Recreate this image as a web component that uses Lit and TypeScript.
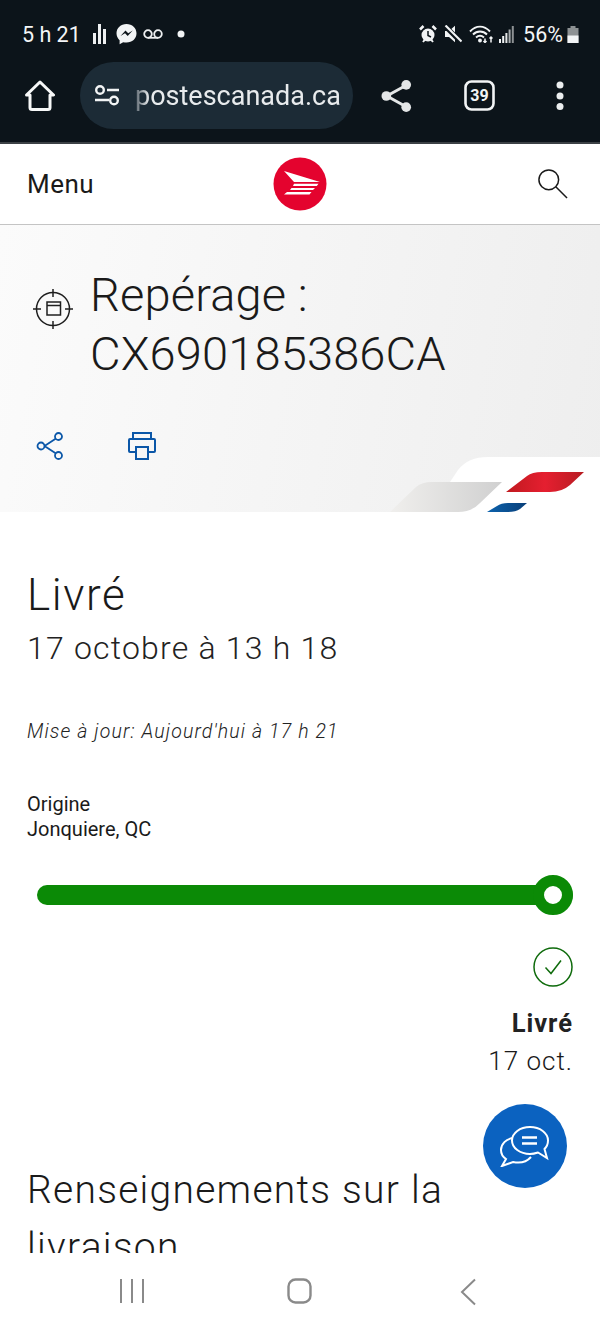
import { LitElement, html, css } from "lit";
import { customElement } from "lit/decorators.js";

@customElement("app-root")
export class AppRoot extends LitElement {
  static styles = css`
    :host { display: block; width: 600px; height: 1333px; overflow: hidden; background: #fff; font-family: Roboto, "Liberation Sans", sans-serif; color: #1a1a1a; position: relative; }
    svg { display: block; flex: none; }
    .chrome { height: 142px; background: #0c141a; border-bottom: 2px solid #3c4145; color: #fff; box-sizing: content-box; }
    .status { height: 62px; padding: 6px 21px 0 22px; display: flex; align-items: center; box-sizing: border-box; }
    .time { font-size: 21.5px; font-weight: 400; color: #f4f6f7; margin-right: 12px; }
    .status-left { display: flex; align-items: center; flex: 1; }
    .status-right { display: flex; align-items: center; }
    .pct { font-size: 21.5px; color: #f4f6f7; margin-left: 9px; margin-right: 4px; }
    .toolbar { height: 67px; display: flex; align-items: center; padding-left: 25px; }
    .pill { width: 273px; height: 67px; border-radius: 34px; background: #1c2b36; margin-left: 25px; display: flex; align-items: center; padding-left: 14px; box-sizing: border-box; gap: 15px; }
    .url { font-size: 27px; color: #e8ebed; white-space: nowrap; -webkit-mask-image: linear-gradient(90deg, rgba(0,0,0,.3), #000 14px); mask-image: linear-gradient(90deg, rgba(0,0,0,.3), #000 14px); }
    .tool-share { margin-left: 28px; }
    .tool-tabs { margin-left: 51px; }
    .tool-more { margin-left: 61px; }
    .head { height: 80px; display: flex; align-items: center; justify-content: space-between; padding: 0 32px 0 27px; border-bottom: 1px solid #c4c4c4; position: relative; box-sizing: content-box; }
    .menu { font-size: 26px; font-weight: 400; color: #1a1a1a; letter-spacing: 0.5px; }
    .logo { position: absolute; left: 273px; top: 13px; }
    .hero { height: 287px; position: relative; background: linear-gradient(100deg, #fbfbfb 0%, #f4f4f4 55%, #eeeeee 100%); overflow: hidden; padding: 40px 0 0 33px; box-sizing: border-box; }
    .title-row { display: flex; gap: 16px; align-items: flex-start; }
    .target { margin-top: 23px; margin-left: -1px; }
    h1 { margin: 0; font-size: 47px; font-weight: 300; line-height: 59px; color: #1a1a1a; letter-spacing: 0.15px; }
    .actions { display: flex; gap: 64px; margin-top: 49px; margin-left: 3px; }
    .swoosh { position: absolute; left: 380px; top: 225px; }
    .content { height: 741px; overflow: hidden; padding: 0 27px; box-sizing: border-box; }
    .status-title { margin: 51px 0 0; font-size: 44px; font-weight: 300; line-height: 64px; letter-spacing: 1.6px; }
    .date { font-size: 32px; font-weight: 300; line-height: 42px; letter-spacing: 1.2px; color: #222; }
    .updated { font-size: 19.5px; font-style: italic; font-weight: 300; margin-top: 50px; letter-spacing: 1.12px; line-height: 26px; color: #222; }
    .origin { font-size: 20px; line-height: 25px; margin-top: 47px; color: #1a1a1a; font-weight: 400; }
    .track { position: relative; height: 40px; margin: 33px 0 0 10px; width: 536px; display: flex; align-items: center; }
    .bar { height: 20px; border-radius: 10px; background: #0b8a06; flex: 1; }
    .dot { position: absolute; right: 0; top: 0; width: 40px; height: 40px; border-radius: 50%; background: #fff; border: 11px solid #0b8a06; box-sizing: border-box; }
    .final { display: flex; flex-direction: column; align-items: flex-end; margin-top: 32px; }
    .final-title { font-size: 25.5px; font-weight: 700; color: #222; line-height: 30px; margin-top: 21px; letter-spacing: 1px; }
    .final-date { font-size: 26px; font-weight: 300; line-height: 36px; letter-spacing: 1px; margin-top: 5px; }
    h2 { margin: 0; font-size: 39px; font-weight: 300; line-height: 57px; letter-spacing: 1.25px; margin-top: 83px; }
    .fab { position: absolute; left: 483px; top: 1104px; width: 84px; height: 84px; border-radius: 50%; background: #0b62c0; display: flex; align-items: center; justify-content: center; }
    .nav { height: 80px; background: #fff; position: relative; }
    .nav svg { position: absolute; top: 25px; }
  `;

  render() {
    return html`
      <div class="chrome">
        <div class="status">
          <div class="status-left">
            <span class="time">5 h 21</span>
            <svg width="14" height="22" viewBox="0 0 14 22" fill="#eef0f1"><rect x="0" y="10" width="3" height="11"/><rect x="5" y="1" width="3" height="20"/><rect x="10" y="6" width="3" height="15"/></svg>
            <svg style="margin-left:9px" width="21" height="22" viewBox="0 0 21 22"><path d="M10.5 1C4.8 1 .5 5 .5 10.3c0 2.8 1.2 5.2 3.1 6.900v4l3.600-2c1 .3 2.100.4 3.300.4 5.700 0 10-4 10-9.300S16.200 1 10.500 1z" fill="#f2f4f5"/><path d="M4.500 13l5-5.500 2.700 2.700 4.500-2.700-5 5.500-2.700-2.700z" fill="#0c141a"/></svg>
            <svg style="margin-left:6px" width="20" height="10" viewBox="0 0 20 10" fill="none" stroke="#eef0f1" stroke-width="1.800"><circle cx="5" cy="5" r="3.800"/><circle cx="15" cy="5" r="3.800"/><path d="M5 8.800h10"/></svg>
            <svg style="margin-left:14px" width="8" height="8" viewBox="0 0 8 8"><circle cx="4" cy="4" r="3.500" fill="#f2f4f5"/></svg>
          </div>
          <div class="status-right">
            <svg width="18" height="18" viewBox="0 0 18 18"><circle cx="9" cy="10" r="6.500" fill="#f2f4f5"/><path d="M9 6v4.500l3 1.500" stroke="#0c141a" stroke-width="1.500" fill="none"/><path d="M1 4.500 4.500 1M17 4.500 13.500 1" stroke="#f2f4f5" stroke-width="2.500"/><path d="M4 17l2-2.500M14 17l-2-2.500" stroke="#f2f4f5" stroke-width="2"/></svg>
            <svg style="margin-left:7px" width="18" height="18" viewBox="0 0 18 18"><path d="M1 6h4L11 .8v16.400L5 12H1z" fill="#f2f4f5"/><path d="M0 0l17 17" stroke="#0c141a" stroke-width="5"/><path d="M1.500 .5l16 16" stroke="#f2f4f5" stroke-width="2.200"/></svg>
            <svg style="margin-left:7px" width="24" height="18" viewBox="0 0 24 18" fill="none" stroke="#f2f4f5" stroke-width="1.900"><path d="M1 6.500c6-6.500 14-6.500 20 0M4 9.500c4-4 10-4 14 0M7 12.500c2.500-2.200 5.500-2.200 8 0"/><circle cx="11" cy="15.500" r="1" fill="#f2f4f5"/><path d="M16 17.500v-4M14.500 16l1.500 1.500 1.500-1.500M22 17.500v-5M20.500 13.500l1.500-1.500 1.500 1.500" stroke-width="1.500"/></svg>
            <svg style="margin-left:6px" width="15" height="17" viewBox="0 0 15 17"><rect x="0" y="13" width="2" height="4" fill="#f2f4f5"/><rect x="3.200" y="10" width="2" height="7" fill="#f2f4f5"/><rect x="6.400" y="7" width="2" height="10" fill="#e4e6e7"/><rect x="9.600" y="3.500" width="2" height="13.500" fill="#a9adaf"/><rect x="12.800" y="0" width="2" height="17" fill="#8d9193"/></svg>
            <span class="pct">56%</span>
            <svg width="12" height="17" viewBox="0 0 12 17"><path d="M3.500 0h5v2h3v15H.5V2h3z" fill="#8d9193"/><rect x=".5" y="9.500" width="11" height="7.500" fill="#f2f4f5"/></svg>
          </div>
        </div>
        <div class="toolbar">
          <svg width="30" height="31" viewBox="0 0 30 31" fill="none" stroke="#f7f8f8" stroke-width="3" stroke-linejoin="round"><path d="M1.500 15 15 2l13.500 13H25v12.500a2 2 0 0 1-2 2H7a2 2 0 0 1-2-2V15z"/></svg>
          <div class="pill">
            <svg width="26" height="21" viewBox="0 0 26 21" fill="none" stroke="#f2f4f5" stroke-width="2.400"><circle cx="6" cy="5" r="3.800"/><path d="M13 5h12M1 15h14"/><circle cx="20" cy="15.500" r="3.800"/></svg>
            <span class="url">postescanada.ca</span>
          </div>
          <svg class="tool-share" width="32" height="34" viewBox="0 0 33 34"><path d="M26 6 6 17l20 11" fill="none" stroke="#e4e6e7" stroke-width="3"/><circle cx="26" cy="5.500" r="5" fill="#e4e6e7"/><circle cx="5.500" cy="17" r="5" fill="#e4e6e7"/><circle cx="26" cy="28.500" r="5" fill="#e4e6e7"/></svg>
          <svg class="tool-tabs" width="31" height="31" viewBox="0 0 31 31"><rect x="1.500" y="1.500" width="28" height="28" rx="6" fill="none" stroke="#f2f4f5" stroke-width="2.600"/><text x="15.500" y="21" text-anchor="middle" font-family="Roboto" font-weight="700" font-size="16" fill="#f2f4f5">39</text></svg>
          <svg class="tool-more" width="8" height="30" viewBox="0 0 8 30" fill="#eceeef"><circle cx="4" cy="4" r="3.500"/><circle cx="4" cy="15" r="3.500"/><circle cx="4" cy="25.500" r="3.500"/></svg>
        </div>
      </div>

      <div class="head">
        <span class="menu">Menu</span>
        <svg class="logo" width="54" height="54" viewBox="0 0 54 54"><circle cx="27" cy="27" r="26.500" fill="#e4032e"/><path d="M11 14 47 25H21zM21 26.800H45.500L43.800 29H20zM18.500 31H42L40 33H17zM14 35H38.500L36.500 37.500H11z" fill="#fff"/></svg>
        <svg width="30" height="30" viewBox="0 0 32 32" fill="none" stroke="#1a1a1a" stroke-width="1.600"><circle cx="11.500" cy="11.500" r="10.500"/><path d="M19 19l12 12"/></svg>
      </div>

      <div class="hero">
        <div class="title-row">
          <svg class="target" width="42" height="42" viewBox="0 0 42 42" fill="none" stroke="#1f1f1f" stroke-width="1.500"><circle cx="21" cy="21" r="16.500"/><path d="M21 1v8M21 33v8M1 21h8M33 21h8"/><rect x="15" y="14" width="13.500" height="13"/><path d="M15 17.500h13.500"/></svg>
          <h1>Repérage :<br />CX690185386CA</h1>
        </div>
        <div class="actions">
          <svg width="28" height="28" viewBox="0 0 28 28" fill="none" stroke="#0b57a8" stroke-width="1.800"><path d="M20 6.500 8.500 14 20 21.500"/><circle cx="22.500" cy="4.500" r="3.500" fill="#f8f8f8"/><circle cx="5" cy="14" r="3.500" fill="#f8f8f8"/><circle cx="22.500" cy="23.500" r="3.500" fill="#f8f8f8"/></svg>
          <svg width="28" height="28" viewBox="0 0 28 28" fill="none" stroke="#0b57a8" stroke-width="2"><path d="M5 7V1h18v6"/><rect x="1" y="7" width="26" height="13" rx="1"/><rect x="8" y="15" width="12" height="12" fill="#f6f6f6"/></svg>
        </div>
        <svg class="swoosh" width="220" height="62" viewBox="0 0 220 62">
          <defs>
            <linearGradient id="g" x1="0" x2="1"><stop offset="0" stop-color="#f0efed"/><stop offset="1" stop-color="#d0d0d0"/></linearGradient>
            <linearGradient id="r" x1="0" x2="1"><stop offset="0" stop-color="#c0191f"/><stop offset=".5" stop-color="#e51f30"/><stop offset="1" stop-color="#b71c22"/></linearGradient>
            <linearGradient id="b" x1="0" x2="1"><stop offset="0" stop-color="#0b62ad"/><stop offset="1" stop-color="#0a3f78"/></linearGradient>
          </defs>
          <path d="M50 62 L78 20 Q88 7 108 7 H220 V62 Z" fill="#fff"/>
          <path d="M10 62 L36 37 Q42 32 52 32 H122 L100 53 Q92 62 78 62 Z" fill="url(#g)"/>
          <path d="M126 42 L147 26 Q152 22 162 22 H204 L190 35 Q182 42 170 42 Z" fill="url(#r)"/>
          <path d="M107 62 L117 56 Q121 53 128 53 H147 L140 59 Q136 62 128 62 Z" fill="url(#b)"/>
        </svg>
      </div>

      <div class="content">
        <div class="status-title">Livré</div>
        <div class="date">17 octobre à 13 h 18</div>
        <div class="updated">Mise à jour: Aujourd'hui à 17 h 21</div>
        <div class="origin">Origine<br />Jonquiere, QC</div>
        <div class="track"><div class="bar"></div><div class="dot"></div></div>
        <div class="final">
          <svg width="40" height="40" viewBox="0 0 40 40" fill="none" stroke="#0f6b0c" stroke-width="1.500"><circle cx="20" cy="20" r="19"/><path d="M12.500 20.500l5.500 6 10-13"/></svg>
          <div class="final-title">Livré</div>
          <div class="final-date">17 oct.</div>
        </div>
        <h2>Renseignements sur la livraison</h2>
      </div>

      <div class="nav">
        <svg style="left:119px" width="26" height="26" viewBox="0 0 26 26" fill="none" stroke="#8a8a8a" stroke-width="2"><path d="M2 1v24M13 1v24M24 1v24"/></svg>
        <svg style="left:287px" width="26" height="26" viewBox="0 0 26 26" fill="none" stroke="#8a8a8a" stroke-width="2.400"><rect x="1.500" y="1.500" width="22" height="23" rx="7"/></svg>
        <svg style="left:460px" width="18" height="28" viewBox="0 0 18 28" fill="none" stroke="#8a8a8a" stroke-width="2"><path d="M15 1.500 2 14l13 12.500"/></svg>
      </div>

      <div class="fab">
        <svg width="50" height="42" viewBox="0 0 50 42" fill="none" stroke="#fff" stroke-width="2"><path d="M13 13C6 14 1 19 1 25c0 4 2 7 5 9l-4 7 11-4c7 1.500 14-.5 18-5"/><path d="M30 2c-10 0-18 6-18 13.500S20 29 30 29c3 0 5-.5 8-1.500l9 5.500-2.500-9c2.500-2.500 3.500-5.500 3.500-8.500C48 8 40 2 30 2z" fill="#0b62c0"/><path d="M22 12.500h15M22 18.500h15" stroke-width="2.400"/></svg>
      </div>
    `;
  }
}
